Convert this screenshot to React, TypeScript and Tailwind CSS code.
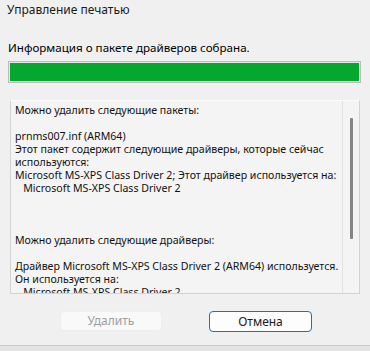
import React from "react";

const lines: string[] = [
  "Можно удалить следующие пакеты:",
  "",
  "prnms007.inf (ARM64)",
  "Этот пакет содержит следующие драйверы, которые сейчас",
  "используются:",
  "Microsoft MS-XPS Class Driver 2; Этот драйвер используется на:",
  "   Microsoft MS-XPS Class Driver 2",
  "",
  "",
  "",
  "Можно удалить следующие драйверы:",
  "",
  "Драйвер Microsoft MS-XPS Class Driver 2 (ARM64) используется.",
  "Он используется на:",
  "   Microsoft MS-XPS Class Driver 2",
];

export default function App() {
  return (
    <div
      className="w-[370px] h-[351px] bg-[#f0f0f0] flex flex-col text-black overflow-hidden"
      style={{ fontFamily: '"Noto Sans", "Open Sans", sans-serif' }}
    >
      <div className="h-[20px] pl-[7px] pt-[1px] text-[12px] leading-[17px] text-[#1a1a1a]">
        Управление печатью
      </div>
      <div className="h-[19px] mt-[20px] pl-[8px] text-[11.6px] leading-[16px]">
        Информация о пакете драйверов собрана.
      </div>
      <div className="mt-[2px] ml-[8px] w-[353px] h-[22px] border border-[#bcbcbc] bg-[#e6e6e6] p-[1px]">
        <div className="w-full h-full bg-[#06a72f]" />
      </div>
      <div className="mt-[17px] ml-[10px] w-[350px] h-[194px] border border-[#d2d2d2] border-t-[#fcfcfc] bg-[#f4f4f4] flex">
        <div className="flex-1 overflow-hidden pl-[4px] pt-[3px] text-[10.6px] leading-[13px] whitespace-pre text-[#111]">
          {lines.map((l, i) => (
            <div key={i} className="h-[13px]">
              {l}
            </div>
          ))}
        </div>
        <div className="w-[17px] border-l border-[#e2e2e2] flex justify-center pt-[17px]">
          <div className="w-[3px] h-[121px] bg-[#858585] rounded-[1px] ml-[1px]" />
        </div>
      </div>
      <div className="mt-[17px] flex pl-[60px] gap-[47px]">
        <div className="w-[102px] h-[20px] rounded-[4px] bg-[#f9f9f9] border border-[#eeeeee] flex items-center justify-center text-[12px] text-[#9e9e9e]">
          Удалить
        </div>
        <div className="w-[103px] h-[21px] rounded-[4px] bg-[#fdfdfd] border border-[#1f6fbf] flex items-center justify-center text-[12px] text-[#1a1a1a]">
          Отмена
        </div>
      </div>
      <div className="mt-auto h-[6px] border-t border-[#c9c9c9] bg-[#e4e4e4]" />
    </div>
  );
}
